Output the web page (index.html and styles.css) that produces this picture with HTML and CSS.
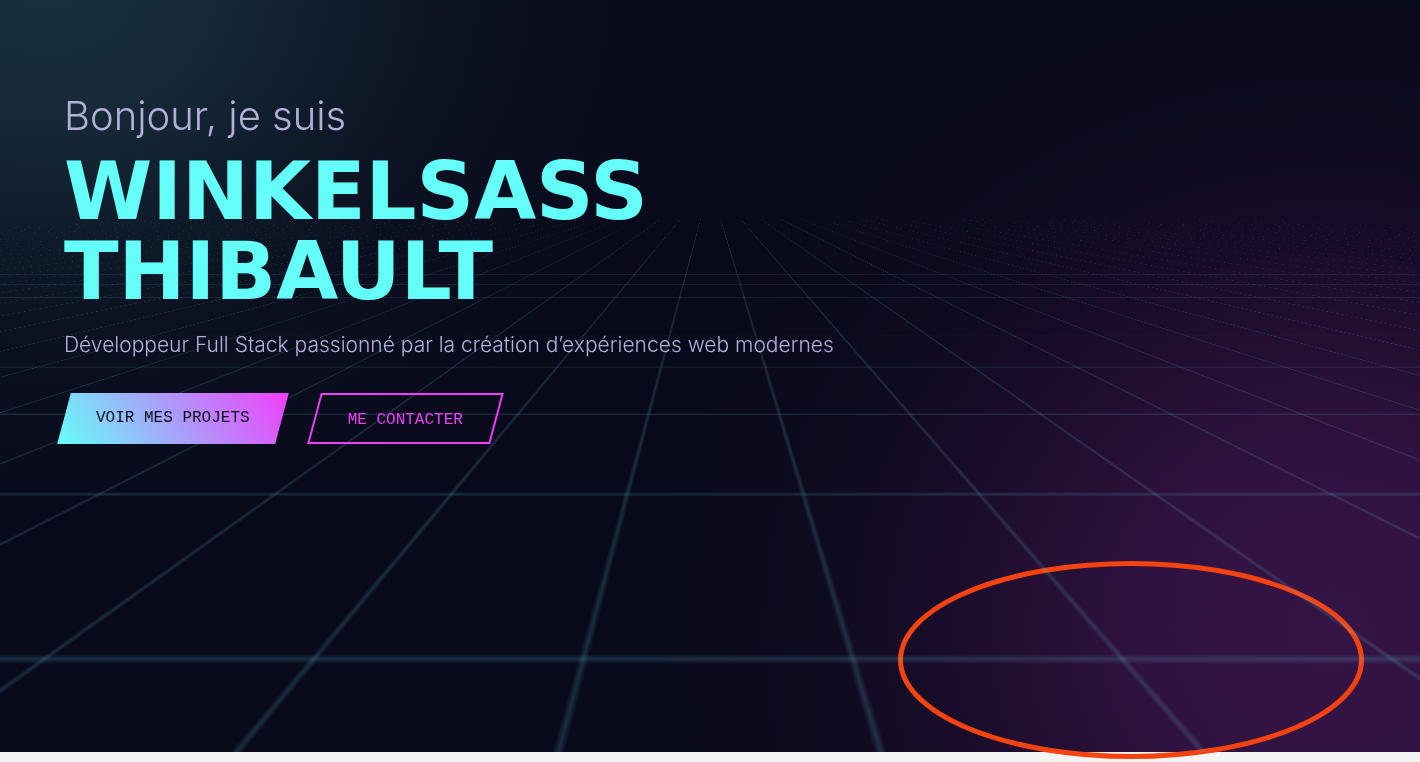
FILE: index.html
```html
<!DOCTYPE html>
<html lang="fr">
<head>
  <meta charset="utf-8">
  <meta name="viewport" content="width=device-width, initial-scale=1">
  <title>Winkelsass Thibault</title>
  <link rel="stylesheet" href="styles.css">
</head>
<body>
  <main class="page">
    <section class="hero">
      <div class="backdrop" aria-hidden="true"><div class="grid"></div></div>
      <div class="content">
        <h1 class="title">
          <span class="greeting">Bonjour, je suis</span>
          <span class="name">WINKELSASS<br>THIBAULT</span>
        </h1>
        <p class="tagline">Développeur Full Stack passionné par la création d’expériences web modernes</p>
        <nav class="actions">
          <a class="button button-primary" href="#projets">VOIR MES PROJETS</a>
          <a class="button button-outline" href="#contact">ME CONTACTER</a>
        </nav>
      </div>
    </section>
    <div class="next-section"></div>
    <svg class="marker" viewBox="0 0 466 198" aria-hidden="true">
      <ellipse cx="233" cy="99" rx="230.5" ry="96.5"/>
    </svg>
  </main>
</body>
</html>
```

FILE: styles.css
```css
* {
  box-sizing: border-box;
}

body {
  margin: 0;
  background: #f4f4f4;
}

.page {
  position: relative;
  display: flex;
  flex-direction: column;
  min-height: 100vh;
  overflow: hidden;
}

.hero {
  position: relative;
  flex: 1;
  padding: 88px 64px;
  color: #b3afd9;
  font-family: Inter, "Noto Sans", sans-serif;
  background:
    radial-gradient(640px 540px at 50px -20px, #19303f 0%, #162a38 24%, #0f1b2a 48%, #0b1020 70%, #080a1b00 100%),
    radial-gradient(680px 660px at 1330px 630px, #351445 0%, #301242 26%, #250f33 42%, #190c2a 58%, #0f0b20 74%, #080a1b00 100%),
    #080a1b;
}

.next-section {
  height: 10px;
}

/* Neon floor receding to the horizon */
.backdrop {
  position: absolute;
  inset: 0;
  overflow: hidden;
}

.grid {
  position: absolute;
  top: -480px;
  left: -50%;
  width: 200%;
  height: 200%;
  background-image:
    linear-gradient(#5cbcd033 1px, transparent 1px),
    linear-gradient(90deg, #5cbcd033 1px, transparent 1px);
  background-position: 46px 15px;
  background-size: 50px 50px;
  transform: perspective(500px) rotateX(80deg);
}

.content {
  position: relative;
}

.title {
  display: flex;
  flex-direction: column;
  margin: 0;
}

.greeting {
  margin-bottom: 8px;
  font-size: 40px;
  font-weight: 300;
  line-height: 56px;
}

.name {
  color: #64fff8;
  font-family: "DejaVu Sans", sans-serif;
  font-size: 80px;
  font-weight: 700;
  line-height: 80px;
}

.tagline {
  margin: 17px 0 32px;
  font-size: 21px;
  font-weight: 300;
  line-height: 32px;
}

.actions {
  display: flex;
  flex-wrap: wrap;
  gap: 32px;
}

.button {
  position: relative;
  z-index: 0;
  padding: 16px 32px 12px;
  font-family: "Liberation Mono", monospace;
  font-size: 16px;
  line-height: 19px;
  text-decoration: none;
}

.button::before {
  content: "";
  position: absolute;
  inset: 0;
  z-index: -1;
  transform: skewX(-15deg);
}

.button-primary {
  color: #0a0a1f;
}

.button-primary::before {
  background: linear-gradient(45deg, #64fff8, #f03efb);
}

.button-outline {
  padding: 18px 34px 14px;
  color: #f03efb;
}

.button-outline::before {
  border: 2px solid #f03efb;
}

.marker {
  position: absolute;
  right: 56px;
  bottom: 3px;
  width: 466px;
  fill: none;
  stroke: #f44310;
  stroke-width: 5;
}
```
